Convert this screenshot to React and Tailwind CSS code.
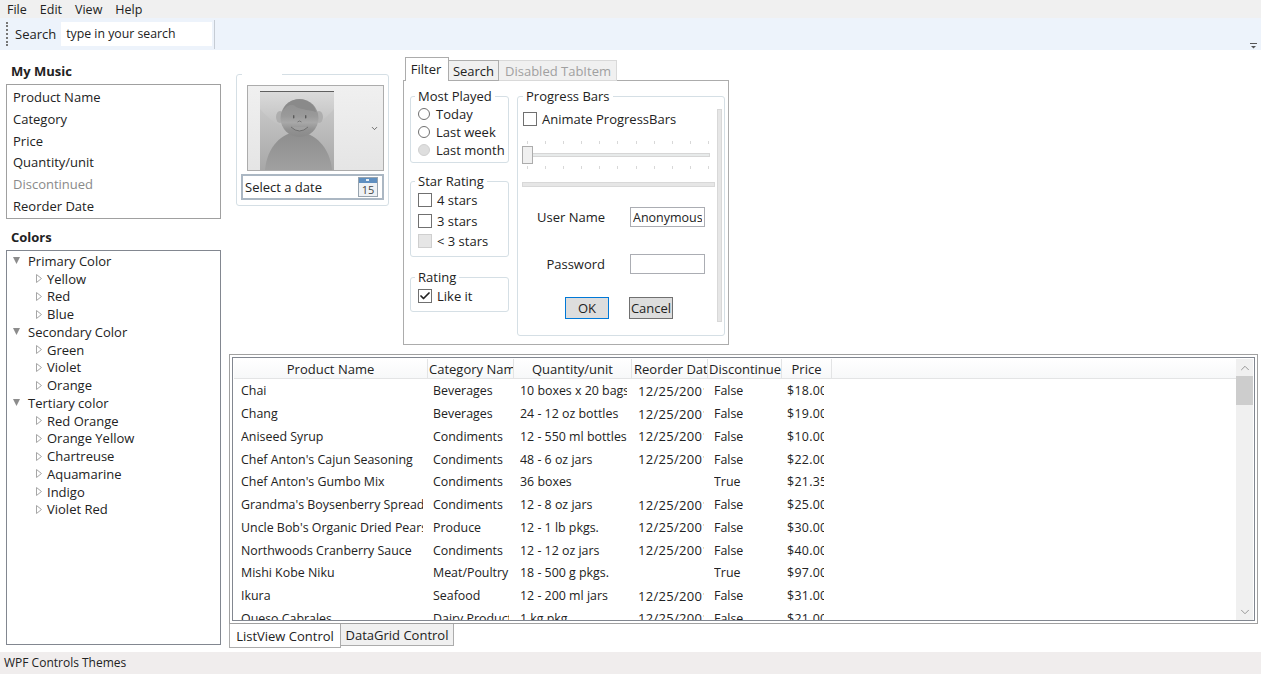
import { ChevronDown, ChevronUp, Check } from 'lucide-react'

const font = { fontFamily: '"Open Sans", sans-serif' }

const musicItems = ['Product Name', 'Category', 'Price', 'Quantity/unit', 'Discontinued', 'Reorder Date']

const colorTree = [
  { name: 'Primary Color', kids: ['Yellow', 'Red', 'Blue'] },
  { name: 'Secondary Color', kids: ['Green', 'Violet', 'Orange'] },
  { name: 'Tertiary color', kids: ['Red Orange', 'Orange Yellow', 'Chartreuse', 'Aquamarine', 'Indigo', 'Violet Red'] },
]

const products = [
  ['Chai', 'Beverages', '10 boxes x 20 bags', '12/25/2001', 'False', '$18.00'],
  ['Chang', 'Beverages', '24 - 12 oz bottles', '12/25/2001', 'False', '$19.00'],
  ['Aniseed Syrup', 'Condiments', '12 - 550 ml bottles', '12/25/2001', 'False', '$10.00'],
  ["Chef Anton's Cajun Seasoning", 'Condiments', '48 - 6 oz jars', '12/25/2001', 'False', '$22.00'],
  ["Chef Anton's Gumbo Mix", 'Condiments', '36 boxes', '', 'True', '$21.35'],
  ["Grandma's Boysenberry Spread", 'Condiments', '12 - 8 oz jars', '12/25/2001', 'False', '$25.00'],
  ["Uncle Bob's Organic Dried Pears", 'Produce', '12 - 1 lb pkgs.', '12/25/2001', 'False', '$30.00'],
  ['Northwoods Cranberry Sauce', 'Condiments', '12 - 12 oz jars', '12/25/2001', 'False', '$40.00'],
  ['Mishi Kobe Niku', 'Meat/Poultry', '18 - 500 g pkgs.', '', 'True', '$97.00'],
  ['Ikura', 'Seafood', '12 - 200 ml jars', '12/25/2001', 'False', '$31.00'],
  ['Queso Cabrales', 'Dairy Products', '1 kg pkg.', '12/25/2001', 'False', '$21.00'],
]

function Avatar() {
  return (
    <svg width="74" height="79" viewBox="0 0 74 79" className="shrink-0">
      <defs>
        <linearGradient id="bgGrad" x1="0" y1="0" x2="0" y2="1">
          <stop offset="0" stopColor="#cfcfcf" />
          <stop offset="1" stopColor="#a8a8a8" />
        </linearGradient>
        <linearGradient id="topGrad" x1="0" y1="0" x2="0" y2="1">
          <stop offset="0" stopColor="#dadada" />
          <stop offset="1" stopColor="#bcbcbc" />
        </linearGradient>
        <linearGradient id="bodyGrad" x1="0" y1="0" x2="0" y2="1">
          <stop offset="0" stopColor="#8d8d8d" />
          <stop offset="1" stopColor="#a0a0a0" />
        </linearGradient>
        <linearGradient id="headGrad" x1="0" y1="0" x2="0" y2="1">
          <stop offset="0" stopColor="#8e8e8e" />
          <stop offset="0.45" stopColor="#9a9a9a" />
          <stop offset="0.62" stopColor="#a8a8a8" />
          <stop offset="0.8" stopColor="#929292" />
          <stop offset="1" stopColor="#8a8a8a" />
        </linearGradient>
      </defs>
      <rect width="74" height="79" fill="url(#bgGrad)" />
      <path d="M0 18 Q37 60 74 18 V1 H0 Z" fill="url(#topGrad)" />
      <rect width="74" height="1" fill="#5f5f5f" />
      <path d="M5 79 C7 56 22 41 38 41 C54 41 70 56 72 79 Z" fill="url(#bodyGrad)" />
      <ellipse cx="20" cy="26" rx="4" ry="6" fill="#aeaeae" />
      <ellipse cx="59" cy="26" rx="4" ry="6" fill="#aeaeae" />
      <circle cx="39.5" cy="27" r="19" fill="url(#headGrad)" />
      <path d="M23 20 C27 13 33 12 36 16 C43 19 50 19 56 21 C53 5 27 4 23 20 Z" fill="#8a8a8a" />
      <rect x="33" y="24" width="1.4" height="3.5" rx="0.7" fill="#5a5a5a" />
      <rect x="45" y="24" width="1.4" height="3.5" rx="0.7" fill="#5a5a5a" />
      <path d="M37.5 31 Q39.5 29 41.5 31" stroke="#6a6a6a" strokeWidth="0.8" fill="none" />
      <path d="M31 36 Q39.5 44 48 36" stroke="#6f6f6f" strokeWidth="1" fill="#a0a0a0" />
    </svg>
  )
}

function CalendarIcon() {
  return (
    <svg width="20" height="20" viewBox="0 0 20 20">
      <rect x="0.5" y="0.5" width="19" height="19" fill="#eef1f4" stroke="#97a3ae" />
      <rect x="1" y="1" width="18" height="5" fill="#5f8fc0" />
      <rect x="8" y="2" width="3" height="2" fill="#e8eef4" />
      <text x="10" y="17" textAnchor="middle" fontSize="11" fill="#444" style={font}>15</text>
    </svg>
  )
}

function Radio({ label, disabled }) {
  return (
    <div className="flex items-center h-[18px]">
      <span className={`w-3 h-3 rounded-full border ml-[2px] -mt-[1px] ${disabled ? 'bg-[#dedede] border-[#d0d0d0]' : 'bg-white border-[#707070]'}`} />
      <span className="ml-[6px]">{label}</span>
    </div>
  )
}

function CheckRow({ label, disabled, checked, className }) {
  return (
    <div className={`flex items-center h-5 ${className || ''}`}>
      <span className={`w-[14px] h-[14px] border ml-[2px] flex items-center justify-center ${disabled ? 'bg-[#e6e6e6] border-[#cfcfcf]' : 'bg-white border-[#707070]'}`}>
        {checked && <Check size={12} strokeWidth={3.5} className="text-[#222]" />}
      </span>
      <span className="ml-[5px]">{label}</span>
    </div>
  )
}

function Group({ title, className, children }) {
  return (
    <fieldset className={`border border-[#d5dfe5] rounded-[3px] ${className}`}>
      <legend className="ml-[4px] px-[3px] leading-[16px]">{title}</legend>
      {children}
    </fieldset>
  )
}

function Ticks() {
  return (
    <div className="flex justify-between h-[3px] pl-[5px] pr-[1px]">
      {Array.from({ length: 11 }).map((_, i) => (
        <span key={i} className="w-px h-[3px] bg-[#d8d8d8]" />
      ))}
    </div>
  )
}

function FilterPanel() {
  return (
    <div className="w-[326px] ml-[14px] mt-[7px]">
      <div className="flex items-end h-[24px] pl-[2px] relative z-10 -mb-px">
        <div className="w-[44px] h-[24px] bg-white border border-b-0 border-[#acacac] flex items-center justify-center pb-[2px] pr-[2px]">Filter</div>
        <div className="w-[50px] h-[21px] bg-[#f0f0f0] border border-l-0 border-[#acacac] flex items-center justify-center">Search</div>
        <div className="w-[118px] h-[21px] bg-[#f0f0f0] border border-l-0 border-[#d9d9d9] text-[#a0a0a0] flex items-center justify-center pl-[1px]">Disabled TabItem</div>
      </div>
      <div className="h-[265px] border border-[#acacac] flex">
        <div className="w-[99px] ml-[6px] shrink-0">
          <Group title="Most Played" className="h-[75px] mt-[7px]">
            <div className="mt-[1px] pl-[5px] leading-[18px]">
              <Radio label="Today" />
              <Radio label="Last week" />
              <Radio label="Last month" disabled />
            </div>
          </Group>
          <Group title="Star Rating" className="h-[84px] mt-[10px]">
            <div className="pl-[5px]">
              <CheckRow label="4 stars" className="mt-[1px]" />
              <CheckRow label="3 stars" className="mt-[1px]" />
              <CheckRow label="< 3 stars" disabled />
            </div>
          </Group>
          <Group title="Rating" className="h-[43px] mt-[12px]">
            <div className="pl-[5px]">
              <CheckRow label="Like it" className="mt-[1px]" checked />
            </div>
          </Group>
        </div>
        <Group title="Progress Bars" className="w-[208px] h-[248px] mt-[7px] ml-[8px] shrink-0 [&>legend]:ml-[5px]">
          <div className="flex h-[213px] mt-[5px]">
            <div className="w-[195px] ml-[4px] shrink-0">
              <CheckRow label="Animate ProgressBars" className="-ml-[1px]" />
              <div className="w-[188px] mt-[12px]">
                <Ticks />
                <div className="h-[18px] my-[2px] flex items-center relative">
                  <div className="w-full h-1 bg-[#e7eaea] border border-[#d6d6d6]" />
                  <div className="absolute left-0 top-0 w-[11px] h-[18px] bg-[#f0f0f0] border border-[#acacac]" />
                </div>
                <Ticks />
              </div>
              <div className="w-[193px] h-[5px] mt-[13px] bg-[#e6e6e6] border border-[#d8d8d8]" />
              <div className="flex items-center h-[20px] mt-[20px]">
                <span className="w-[83px] text-right">User Name</span>
                <input readOnly value="Anonymous" className="w-[75px] h-[20px] ml-[25px] border border-[#abadb3] px-[2px] outline-none text-[12.5px]" />
              </div>
              <div className="flex items-center h-[20px] mt-[27px]">
                <span className="w-[83px] text-right">Password</span>
                <input readOnly className="w-[75px] h-[20px] ml-[25px] border border-[#abadb3] outline-none" />
              </div>
              <div className="flex mt-[23px] ml-[43px]">
                <button className="w-[44px] h-[22px] bg-[#dddddd] border border-[#0078d7]">OK</button>
                <button className="w-[44px] h-[22px] ml-[20px] bg-[#dddddd] border border-[#707070]">Cancel</button>
              </div>
            </div>
            <div className="w-[5px] h-[213px] bg-[#e6e6e6] border border-[#d8d8d8] shrink-0" />
          </div>
        </Group>
      </div>
    </div>
  )
}

function ProductTable() {
  const cols = [
    { label: 'Product Name', w: 'w-[194px]', head: 'justify-center', cell: 'pl-[7px] pr-[5px]' },
    { label: 'Category Name', w: 'w-[86px]', head: 'pl-[1px]', cell: 'pl-[5px] pr-[5px]' },
    { label: 'Quantity/unit', w: 'w-[118px]', head: 'justify-center', cell: 'pl-[6px] pr-[5px]' },
    { label: 'Reorder Date', w: 'w-[76px]', head: 'pl-[2px]', cell: 'pl-[6px] pr-[4px] text-[13px] tracking-[0.3px] -mt-[1px]' },
    { label: 'Discontinued', w: 'w-[74px]', head: 'pl-[1px]', cell: 'pl-[6px] pr-[5px]' },
    { label: 'Price', w: 'w-[50px]', head: 'justify-center', cell: 'pl-[5px] pr-[8px] tracking-[0.3px]' },
  ]
  return (
    <div className="h-[270px] w-[1029px] border border-[#a0a0a0] p-[2px]">
      <div className="h-[264px] border border-[#828790] flex overflow-hidden">
        <div className="flex-1 min-w-0 overflow-hidden pl-[1px] pt-[1px]">
          <div className="flex h-[20px] mb-[1px] border-b border-[#e3e4e5] bg-gradient-to-b from-white to-[#f7f8f9]">
            {cols.map((c) => (
              <div key={c.label} className={`${c.w} shrink-0 h-[20px] flex items-center overflow-hidden whitespace-nowrap border-r border-[#e3e4e5] ${c.head}`}>
                {c.label}
              </div>
            ))}
          </div>
          {products.map((row) => (
            <div key={row[0]} className="flex h-[22.75px] items-center text-[12.4px]">
              {row.map((val, i) => (
                <div key={i} className={`${cols[i].w} shrink-0 ${cols[i].cell}`}>
                  <div className="overflow-hidden whitespace-nowrap">{val || '\u00a0'}</div>
                </div>
              ))}
            </div>
          ))}
        </div>
        <div className="w-[17px] mr-[1px] mt-[1px] shrink-0 bg-[#f0f0f0] flex flex-col items-center">
          <div className="h-[17px] flex items-center justify-center">
            <ChevronUp size={14} strokeWidth={1.5} className="text-[#8a8a8a]" />
          </div>
          <div className="h-[29px] w-full bg-[#cdcdcd]" />
          <div className="flex-1" />
          <div className="h-[17px] flex items-center justify-center">
            <ChevronDown size={14} strokeWidth={1.5} className="text-[#8a8a8a]" />
          </div>
        </div>
      </div>
    </div>
  )
}

function CollapsedArrow() {
  return (
    <svg width="6" height="9" viewBox="0 0 6 9" className="shrink-0">
      <path d="M0.5 0.5 L5.5 4.5 L0.5 8.5 Z" fill="white" stroke="#a6a6a6" />
    </svg>
  )
}

function ExpandedArrow() {
  return (
    <svg width="7" height="7" viewBox="0 0 7 7" className="shrink-0">
      <path d="M0 0 H7 L3.5 7 Z" fill="#8c8c8c" />
    </svg>
  )
}

export default function App() {
  return (
    <div className="w-[1261px] h-[674px] overflow-hidden bg-white flex flex-col text-[13px] text-[#222] leading-[18px]" style={font}>
      {/* menu */}
      <div className="h-[18px] bg-[#f0f0f0] flex items-center pl-[7px] pt-[1px] gap-[13px] shrink-0 text-[12.5px]">
        <span>File</span>
        <span>Edit</span>
        <span>View</span>
        <span>Help</span>
      </div>

      {/* toolbar */}
      <div className="h-[32px] bg-[#edf3fb] flex items-center shrink-0 relative">
        <div className="ml-[6px] h-[24px] w-[2px] border-l-2 border-dotted border-[#777]" />
        <span className="ml-[7px]">Search</span>
        <div className="ml-[5px] w-[151px] h-[24px] bg-white flex items-center pl-[5px] text-[12.3px]">type in your search</div>
        <div className="ml-[2px] w-px h-[29px] bg-[#c6ccd4]" />
        <svg width="7" height="6" viewBox="0 0 7 6" className="absolute right-[4px] bottom-[1px]">
          <rect width="7" height="1" fill="#555" />
          <path d="M1 3 H6 L3.5 5.5 Z" fill="#555" />
        </svg>
      </div>

      <div className="flex-1 flex min-h-0">
        {/* left column */}
        <div className="w-[229px] shrink-0 pl-[6px] flex flex-col">
          <div className="font-bold pl-[5px] mt-[12px] h-[22px]">My Music</div>
          <div className="w-[215px] h-[135px] border border-[#a0a0a0] pl-[6px] pt-[1.1px]">
            {musicItems.map((item) => (
              <div key={item} className={`h-[21.8px] flex items-center ${item === 'Discontinued' ? 'text-[#8a8a8a]' : ''}`}>{item}</div>
            ))}
          </div>
          <div className="font-bold pl-[5px] mt-[9px] h-[22px]">Colors</div>
          <div className="w-[215px] h-[395px] border border-[#828790] pl-[6px] pt-[1px]">
            {colorTree.map((group) => (
              <div key={group.name}>
                <div className="h-[17.75px] flex items-center">
                  <ExpandedArrow />
                  <span className="ml-[8px]">{group.name}</span>
                </div>
                {group.kids.map((kid) => (
                  <div key={kid} className="h-[17.75px] flex items-center pl-[23px]">
                    <CollapsedArrow />
                    <span className="ml-[5px]">{kid}</span>
                  </div>
                ))}
              </div>
            ))}
          </div>
        </div>

        {/* right column */}
        <div className="flex-1 min-w-0 flex flex-col">
          <div className="flex h-[295px] shrink-0">
            <fieldset className="w-[153px] h-[132px] ml-[7px] mt-[24px] border border-[#d5dfe5] rounded-[3px] pl-[4px] pb-[4px] flex flex-col">
              <legend className="w-[40px] ml-[1px] h-0" />
              <div className="w-[137px] h-[86px] ml-[6px] mt-[10px] border border-[#acacac] bg-gradient-to-b from-[#f0f0f0] to-[#e5e5e5] flex items-start pl-[12px] pt-[5px]">
                <Avatar />
                <ChevronDown size={9} strokeWidth={2} className="ml-[36px] mt-[33px] text-[#444]" />
              </div>
              <div className="w-[143px] h-[26px] mt-[3px] border-2 border-[#abb7c3] flex items-center pl-[2px] pr-[4px] justify-between">
                <span>Select a date</span>
                <CalendarIcon />
              </div>
            </fieldset>
            <FilterPanel />
          </div>
          <div className="mt-[9px]">
            <ProductTable />
          </div>
          <div className="flex h-[24px]">
            <div className="w-[112px] h-[24px] bg-white border border-t-0 border-[#acacac] flex items-center justify-center">ListView Control</div>
            <div className="w-[113px] h-[22px] bg-[#f0f0f0] border border-t-0 border-l-0 border-[#acacac] flex items-center justify-center">DataGrid Control</div>
          </div>
        </div>
      </div>

      {/* status */}
      <div className="h-[22px] bg-[#f0eded] flex items-center pl-[4px] text-[12px] shrink-0">WPF Controls Themes</div>
    </div>
  )
}
